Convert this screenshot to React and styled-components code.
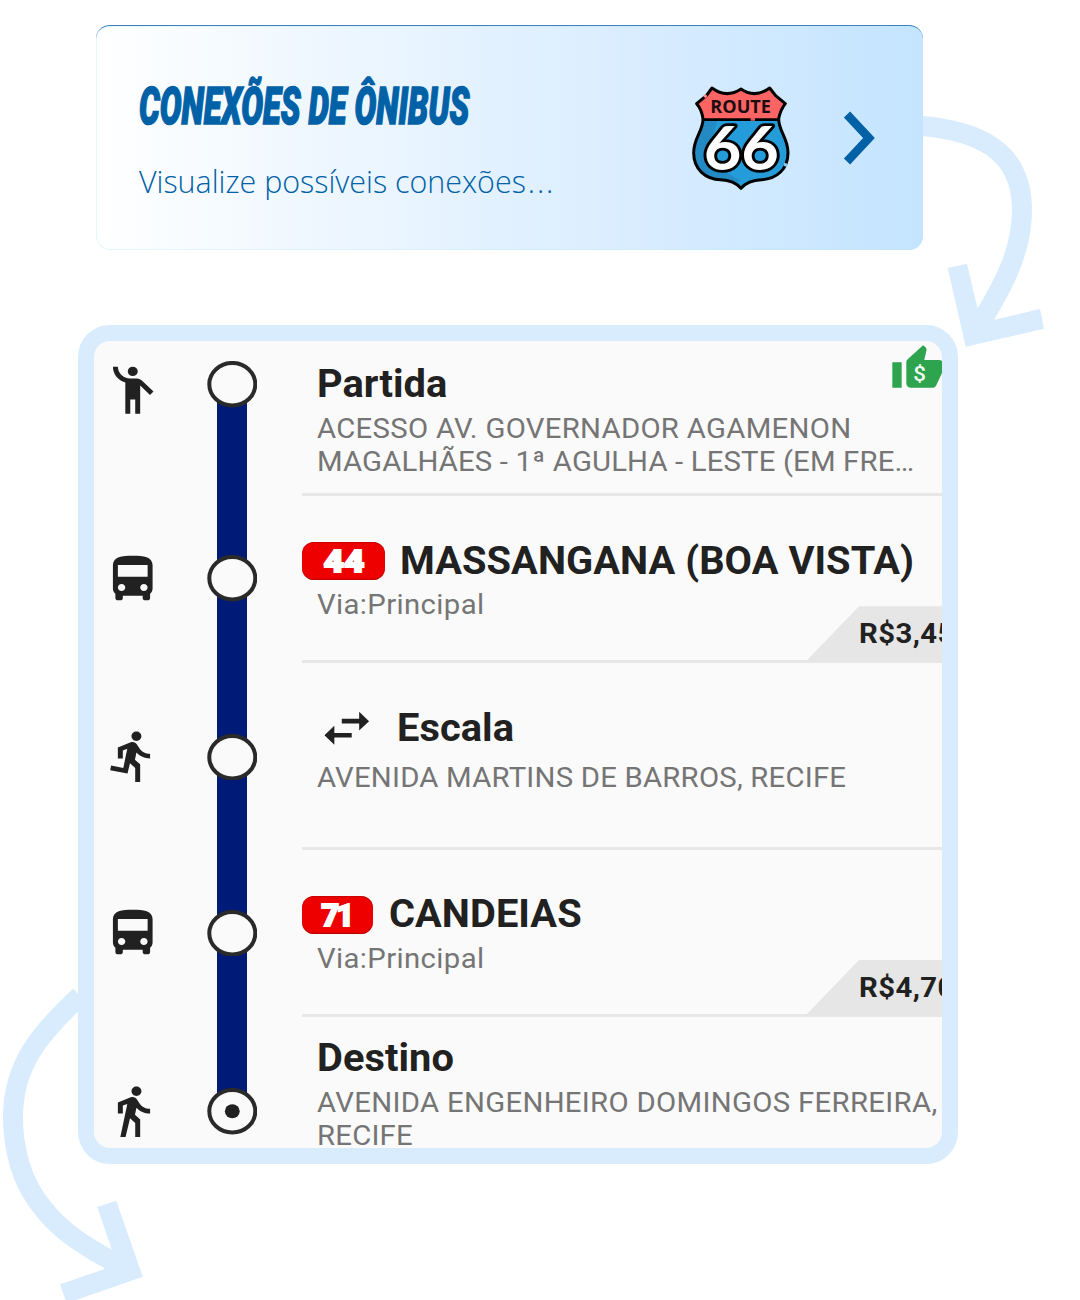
import React from "react";
import styled, { createGlobalStyle } from "styled-components";
import {
  MdDirectionsBus,
  MdDirectionsRun,
  MdDirectionsWalk,
  MdEmojiPeople,
  MdSwapHoriz,
} from "react-icons/md";

const sky = "#d8ecfe";
const ink = "#212121";
const surface = "#fafafa";

const GlobalStyle = createGlobalStyle`
  *, *::before, *::after { box-sizing: border-box; }
  body { margin: 0; background: #fff; font-family: Roboto, "Liberation Sans", sans-serif; }
  h1, h2, p { margin: 0; }
`;

const Page = styled.main`
  position: relative;
  width: 1080px;
  height: 1300px;
  padding: 25px 0 0 78px;
  overflow: hidden;
`;

const Arrows = styled.svg`
  position: absolute;
  inset: 0;
  z-index: 0;
`;

const Banner = styled.section`
  position: relative;
  z-index: 1;
  display: flex;
  align-items: center;
  width: 827px;
  height: 225px;
  margin-left: 18px;
  padding-left: 43px;
  border-radius: 14px;
  border-top: 1px solid #3f80bd;
  box-shadow: inset 0 0 0 1px rgba(180, 235, 255, 0.35);
  background: linear-gradient(90deg, #fff 0%, #f0f8ff 24%, #dceeff 60%, #c4e4ff 100%);
`;

const BannerText = styled.div`
  display: flex;
  flex-direction: column;
  width: 553px;
  height: 100%;
  padding-top: 43px;
  color: #0061a7;
`;

const BannerTitle = styled.h1`
  width: max-content;
  font: italic 900 52px/76px Roboto, sans-serif;
  transform: scaleX(0.626);
  transform-origin: 0 50%;
  white-space: nowrap;
  -webkit-text-stroke: 1.6px #0061a7;
`;

const BannerSubtitle = styled.p`
  width: max-content;
  font: 300 32px/44px "Open Sans", "Noto Sans", sans-serif;
  transform: scaleX(0.951);
  transform-origin: 0 50%;
  margin-top: 14px;
  white-space: nowrap;
`;

const Dots = styled.span`
  padding-left: 2px;
  letter-spacing: 2px;
`;

const Shield = styled.svg`
  width: 98px;
  height: 104px;
  margin-top: 0;
`;

const Chevron = styled.svg`
  width: 32px;
  height: 54px;
  margin-left: 52.5px;
`;

const Panel = styled.section`
  position: relative;
  z-index: 1;
  width: 880px;
  height: 839px;
  margin-top: 75px;
  border: 16px solid ${sky};
  border-radius: 32px;
  background: ${sky};
`;

const Steps = styled.div`
  display: flex;
  flex-direction: column;
  height: 807px;
  border-radius: 16px;
  overflow: hidden;
  background: ${surface};
`;

const Step = styled.article`
  display: grid;
  grid-template-columns: 75.7px 123.5px minmax(0, 1fr);
  grid-template-rows: 100%;
  flex: none;
  height: ${(p) => p.$height}px;
  padding-left: 8.8px;
`;

const Mode = styled.div`
  padding-top: ${(p) => p.$top}px;
  color: ${ink};

  svg {
    display: block;
    width: 59.5px;
    height: 56.4px;
  }
`;

const Rail = styled.div`
  display: flex;
  flex-direction: column;
  align-items: center;
  width: 50px;
  margin-left: 28.5px;
`;

const Segment = styled.span`
  flex: ${(p) => (p.$length ? `0 0 ${p.$length}px` : "1 1 0")};
  width: 30px;
  background: ${(p) => (p.$hidden ? "transparent" : "#001a78")};
`;

const Node = styled.svg`
  position: relative;
  flex: none;
  display: block;
  width: 50px;
  height: 46.5px;
  margin: -10px 0;
`;

const Content = styled.div`
  display: flex;
  flex-direction: column;
  min-width: 0;
  padding-top: ${(p) => p.$top}px;
  border-bottom: ${(p) => (p.$last ? "0" : "3px")} solid #e7e7e7;
`;

const Heading = styled.div`
  display: flex;
  align-items: center;
  flex: none;
  height: 44px;
  padding-left: ${(p) => (p.$badge ? 0 : 15)}px;
`;

const Title = styled.h2`
  font-size: 38px;
  line-height: 44px;
  font-weight: 700;
  letter-spacing: 0.05px;
  color: ${ink};
  white-space: nowrap;
  transform: scaleX(1.047);
  transform-origin: 0 50%;
`;

const SwapIcon = styled(MdSwapHoriz)`
  flex: none;
  width: 59.5px;
  height: 56.4px;
  margin: 2px 21px 0 0;
  color: ${ink};
`;

const LineBadge = styled.span`
  flex: none;
  display: flex;
  justify-content: center;
  width: ${(p) => p.$width}px;
  height: 38px;
  margin: 1.5px 15.5px 0 0;
  border-radius: 12px;
  background: #ee0000;
  box-shadow: inset 0 -1px 1px #b80000, inset 0 1px 1px #c90000;
`;

const LineNumber = styled.span`
  color: #fff;
  font-size: 31px;
  font-weight: 900;
  line-height: 40px;
  letter-spacing: ${(p) => p.$spacing}px;
  margin-left: ${(p) => p.$spacing}px;
  transform: scaleX(${(p) => p.$stretch});
  -webkit-text-stroke: 1.8px #fff;
`;

const Detail = styled.p`
  flex: none;
  width: max-content;
  margin: ${(p) => p.$gap}px 0 0 15.3px;
  font-size: 28px;
  line-height: 33px;
  color: #757575;
  white-space: pre;
  transform: scaleX(1.047);
  transform-origin: 0 50%;
`;

const DetailLine = styled.span`
  display: block;
  letter-spacing: ${(p) => p.$tracking}px;
`;

const Price = styled.div`
  align-self: flex-end;
  flex: none;
  width: 137px;
  height: 56px;
  margin: -15px 0 -3px;
  padding-left: 53.6px;
  background: #e6e6e6;
  clip-path: polygon(54px 0, 100% 0, 100% 100%, 0 100%);
  color: ${ink};
  font-size: 28px;
  font-weight: 700;
  line-height: 56px;
  white-space: nowrap;
`;

const Amount = styled.span`
  display: inline-block;
  letter-spacing: 0.4px;
  transform: scaleX(1.047);
  transform-origin: 0 50%;
`;

const Recommended = styled.svg`
  position: absolute;
  top: 1.9px;
  right: -3.5px;
  width: 56px;
  height: 51.2px;
`;

const ThumbClip = styled.div`
  position: absolute;
  inset: 0;
  border-radius: 16px;
  overflow: hidden;
  pointer-events: none;
`;

function RouteShield() {
  const outline =
    "M127 56 Q170 88 214 59 Q256 88 300 56 L318 79 L347 103 Q333 120 327 148 C326 185 355 205 355 250 C355 300 320 330 275 331 Q235 332 214 357 Q193 332 153 331 C108 330 72 300 72 250 C72 205 101 185 100 148 Q96 120 81 103 L110 79 Z";
  return (
    <Shield viewBox="67 50 294 312">
      <defs>
        <clipPath id="shield">
          <path d={outline} />
        </clipPath>
      </defs>
      <g clipPath="url(#shield)">
        <rect x="60" y="40" width="310" height="330" fill="#259cda" />
        <path d="M60 150H145C115 220 130 300 214 334L180 345H60Z" fill="#238ac3" />
        <rect x="60" y="40" width="310" height="110" fill="#ff6465" />
        <path d="M95 151H327" stroke="#000" strokeWidth="8" />
        <path d="M243 150h13" stroke="#e65a60" strokeWidth="9" />
      </g>
      <path d={outline} fill="none" stroke="#000" strokeWidth="9" strokeLinejoin="round" />
      <path d="M104 84l6-7" stroke="#ff8a8c" strokeWidth="9" />
      <path d="M346 291l3-9" stroke="#8cc9ee" strokeWidth="10" />
      <text x="213" y="131" textAnchor="middle" textLength="182" lengthAdjust="spacingAndGlyphs" fontFamily="'Open Sans', sans-serif" fontWeight="700" fontSize="53" fill="#1b0d0e">
        ROUTE
      </text>
      <text x="102" y="301" textLength="226" lengthAdjust="spacingAndGlyphs" fontFamily="Lato, sans-serif" fontWeight="700" fontSize="184" fill="#fff" stroke="#000" strokeWidth="17" strokeLinejoin="round" paintOrder="stroke">
        66
      </text>
    </Shield>
  );
}

function Stop({ final }) {
  return (
    <Node viewBox="0 0 50 46.5">
      <ellipse cx="25.3" cy="23.25" rx="23" ry="21.3" fill={surface} stroke="#2a2a2a" strokeWidth="4" />
      {final && <ellipse cx="25.3" cy="23.25" rx="7.4" ry="6.9" fill={ink} />}
    </Node>
  );
}

const steps = [
  { height: 154.5, icon: MdEmojiPeople, iconTop: 20.5, node: 43.3, top: 21, title: "Partida", gap: 6,
    detail: [
      { text: "ACESSO AV. GOVERNADOR AGAMENON", tracking: 0.27 },
      { text: "MAGALHÃES - 1ª AGULHA - LESTE (EM FRE…", tracking: 0.14 },
    ] },
  { height: 167, icon: MdDirectionsBus, iconTop: 55.1, node: 83.1, top: 43.1, line: "44", badgeWidth: 83,
    stretch: 1.14, tracking: 0, title: "MASSANGANA (BOA VISTA)", gap: 5.6,
    detail: [{ text: "Via:Principal", tracking: 0.36 }], price: "R$3,45" },
  { height: 187.5, icon: MdDirectionsRun, iconTop: 65.3, node: 94.6, top: 43.1, transfer: true,
    title: "Escala", gap: 11.6, detail: [{ text: "AVENIDA MARTINS DE BARROS, RECIFE", tracking: 0.2 }] },
  { height: 167, icon: MdDirectionsBus, iconTop: 54.6, node: 83, top: 42, line: "71", badgeWidth: 71.5,
    stretch: 1, tracking: -3, title: "CANDEIAS", gap: 6,
    detail: [{ text: "Via:Principal", tracking: 0.36 }], price: "R$4,70" },
  { height: 131, icon: MdDirectionsWalk, iconTop: 65.5, node: 94.3, top: 19, title: "Destino", gap: 6,
    detail: [
      { text: "AVENIDA ENGENHEIRO DOMINGOS FERREIRA,", tracking: 0.3 },
      { text: "RECIFE", tracking: 0.2 },
    ] },
];

export default function App() {
  return (
    <Page>
      <GlobalStyle />
      <Arrows width="1080" height="1300" viewBox="0 0 1080 1300">
        <g fill="none" stroke={sky} strokeWidth="20">
          <path d="M915 125.3L923 126C975 131 1022 148 1022 210C1022 250 1004 284 984 317" />
          <path d="M80 996C40 1033 13 1065 13 1117C13 1150 22 1183 42 1207C60 1231 86 1247 112 1261" />
        </g>
        <g fill={sky}>
          <path d="M965.7 346.7L947.7 268L967 263.7L977.7 309L994.7 319.7L1040 309L1044 328.7Z" />
          <path d="M142.7 1276.7L116.3 1200.7L97.3 1207L112.3 1250.7L104 1269.3L60 1284.3L66.7 1303.3Z" />
        </g>
      </Arrows>

      <Banner>
        <BannerText>
          <BannerTitle>CONEXÕES DE ÔNIBUS</BannerTitle>
          <BannerSubtitle>
            Visualize possíveis conexões<Dots>...</Dots>
          </BannerSubtitle>
        </BannerText>
        <RouteShield />
        <Chevron viewBox="0 0 32 54">
          <path d="M4 3.5L26 27L4 50.5" fill="none" stroke="#0061a7" strokeWidth="8.5" />
        </Chevron>
      </Banner>

      <Panel>
        <Steps>
          {steps.map((step, i) => {
            const Icon = step.icon;
            const last = i === steps.length - 1;
            return (
              <Step key={step.title} $height={step.height}>
                <Mode $top={step.iconTop}>
                  <Icon preserveAspectRatio="none" />
                </Mode>
                <Rail>
                  <Segment $length={step.node - 13.25} $hidden={i === 0} />
                  <Stop final={last} />
                  <Segment $hidden={last} />
                </Rail>
                <Content $top={step.top} $last={last}>
                  <Heading $badge={!!step.line}>
                    {step.line && (
                      <LineBadge $width={step.badgeWidth}>
                        <LineNumber $spacing={step.tracking} $stretch={step.stretch}>
                          {step.line}
                        </LineNumber>
                      </LineBadge>
                    )}
                    {step.transfer && <SwapIcon preserveAspectRatio="none" />}
                    <Title>{step.title}</Title>
                  </Heading>
                  <Detail $gap={step.gap}>
                    {step.detail.map((line) => (
                      <DetailLine key={line.text} $tracking={line.tracking}>
                        {line.text}
                      </DetailLine>
                    ))}
                  </Detail>
                  {step.price && (
                    <Price>
                      <Amount>{step.price}</Amount>
                    </Price>
                  )}
                </Content>
              </Step>
            );
          })}
        </Steps>
        <ThumbClip>
          <Recommended viewBox="0 0 24 24" preserveAspectRatio="none">
            <path
              fill="#2ea44f"
              d="M1 21h4V9H1v12zm22-11c0-1.1-.9-2-2-2h-6.31l.95-4.57.03-.32c0-.41-.17-.79-.44-1.06L14.17 1 7.59 7.59C7.22 7.95 7 8.45 7 9v10c0 1.1.9 2 2 2h9c.83 0 1.54-.5 1.84-1.22l3.02-7.05c.09-.23.14-.47.14-.73v-2z"
            />
            <text x="12.7" y="17.7" textAnchor="middle" fontFamily="Roboto, sans-serif" fontWeight="500" fontSize="9.6" fill="#f4fbf5">
              $
            </text>
          </Recommended>
        </ThumbClip>
      </Panel>
    </Page>
  );
}
